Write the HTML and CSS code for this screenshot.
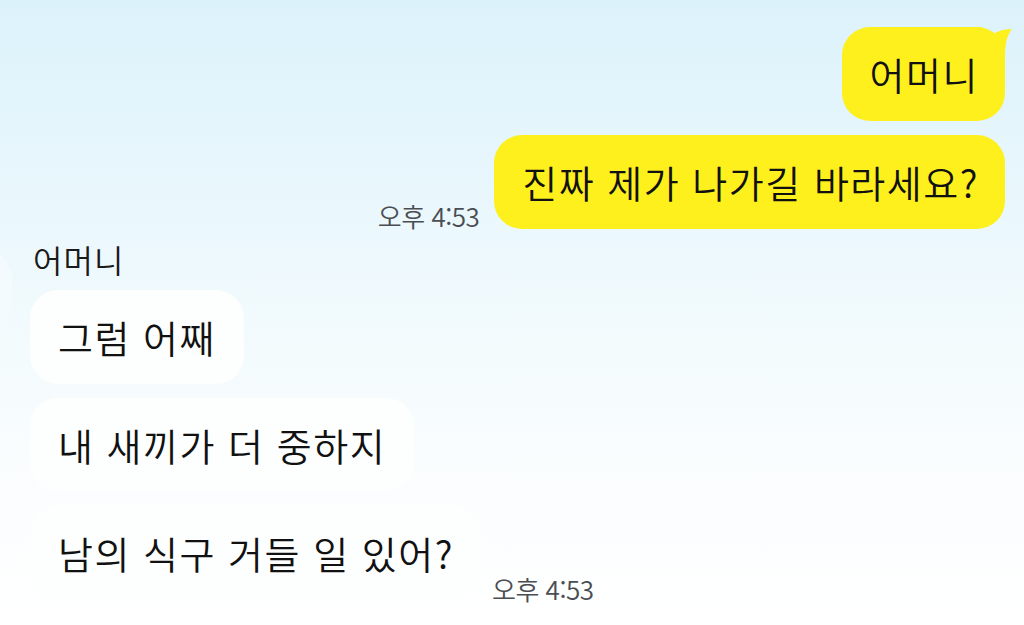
FILE: index.html
```html
<!DOCTYPE html>
<html lang="ko">
<head>
<meta charset="utf-8">
<link rel="stylesheet" href="styles.css">
</head>
<body>
<div class="chat">
  <div class="mine">
    <div class="row">
      <div class="bubble yellow">어머니<svg class="tail" viewBox="0 0 36 34" width="36" height="34"><path d="M0,2 C6,2 10,4 14,10 C20,6 27,4 35,4 C29,12 28,20 28,34 L0,34 Z"/></svg></div>
    </div>
    <div class="row">
      <span class="time">오후 4:53</span>
      <div class="bubble yellow">진짜 제가 나가길 바라세요?</div>
    </div>
  </div>
  <div class="theirs">
    <div class="avatar"></div>
    <div class="col">
      <div class="name">어머니</div>
      <div class="bubble white">그럼 어째</div>
      <div class="bubble white">내 새끼가 더 중하지</div>
      <div class="row-left">
        <div class="bubble white">남의 식구 거들 일 있어?</div>
        <span class="time">오후 4:53</span>
      </div>
    </div>
  </div>
</div>
</body>
</html>
```
FILE: styles.css
```css
html, body {
  margin: 0;
  padding: 0;
}
body {
  width: 1024px;
  height: 625px;
  overflow: hidden;
  background: linear-gradient(180deg, #dcf2fb 0%, #e6f6fc 25%, #f1fafd 50%, #fafdfe 75%, #ffffff 100%);
  font-family: "Noto Sans CJK KR", "Noto Sans", sans-serif;
  color: #111;
}
.chat {
  display: flex;
  flex-direction: column;
  padding-top: 27px;
}
.mine {
  display: flex;
  flex-direction: column;
  align-items: flex-end;
  gap: 14px;
  padding-right: 19px;
}
.row {
  display: flex;
  align-items: flex-end;
  gap: 15px;
}
.bubble {
  font-size: 38px;
  font-weight: 350;
  line-height: 48px;
  padding: 23px 26px 23px 28px;
  border-radius: 28px;
  white-space: nowrap;
  letter-spacing: 1.5px;
  position: relative;
}
.yellow {
  background: #fef01d;
}
.tail {
  position: absolute;
  right: -8px;
  top: -2px;
  fill: #fef01d;
}
.time {
  font-size: 26px;
  font-weight: 350;
  color: #4a4d52;
  line-height: 30px;
  margin-bottom: -2px;
  letter-spacing: -0.5px;
}
.theirs {
  display: flex;
  margin-top: 10px;
}
.avatar {
  width: 90px;
  height: 92px;
  margin-left: -78px;
  margin-top: 6px;
  border-radius: 36px;
  background: #f4fbfe;
}
.col {
  display: flex;
  flex-direction: column;
  align-items: flex-start;
  gap: 14px;
  margin-left: 18px;
}
.name {
  font-size: 32px;
  font-weight: 350;
  line-height: 40px;
  margin-left: 3px;
  margin-bottom: -3px;
  letter-spacing: 1px;
  color: #1a1a1a;
}
.white {
  background: #fdfefe;
  padding-left: 28px;
  padding-right: 28px;
}
.row-left {
  display: flex;
  align-items: flex-end;
  gap: 10px;
}
.row-left .time {
  margin-bottom: -4px;
}
```
